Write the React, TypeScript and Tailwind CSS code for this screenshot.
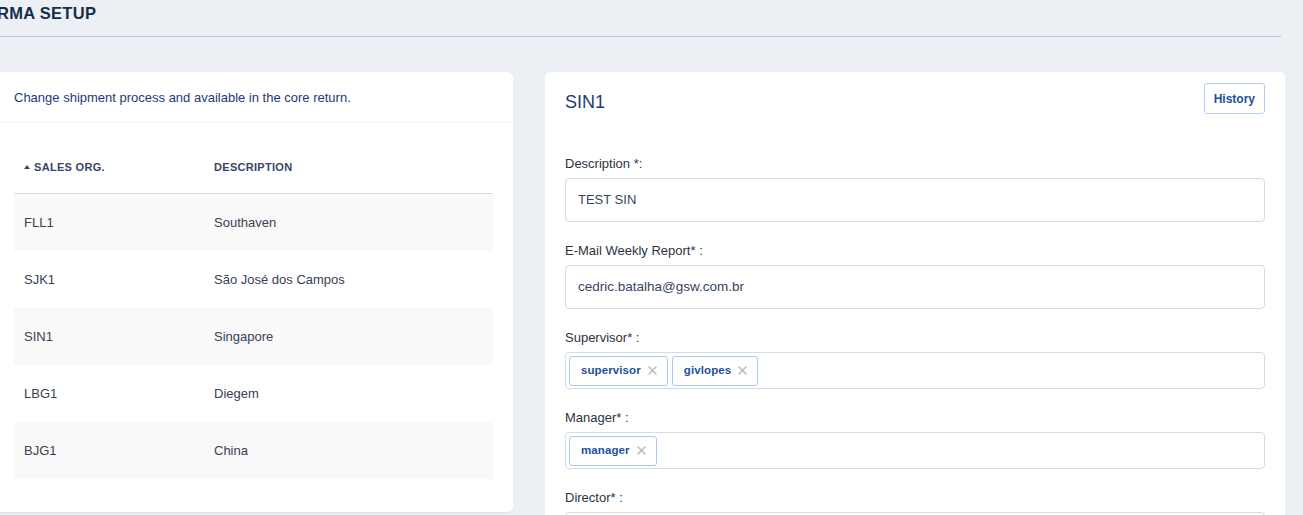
import React from "react";

const rows = [
  { org: "FLL1", desc: "Southaven" },
  { org: "SJK1", desc: "São José dos Campos" },
  { org: "SIN1", desc: "Singapore" },
  { org: "LBG1", desc: "Diegem" },
  { org: "BJG1", desc: "China" },
];

function XIcon() {
  return (
    <svg width="9" height="9" viewBox="0 0 9 9" className="shrink-0">
      <path d="M1 1L8 8M8 1L1 8" stroke="#b7b7b7" strokeWidth="1.4" strokeLinecap="round" />
    </svg>
  );
}

function Chip({ label }: { label: string }) {
  return (
    <div className="h-[30px] flex items-center gap-[7px] pl-[11px] pr-[10px] border border-[#aac7f4] rounded-[3px] bg-white">
      <span className="text-[11.5px] font-bold tracking-[0.1px] text-[#1f4fa2] leading-none">{label}</span>
      <XIcon />
    </div>
  );
}

function Label({ children, first }: { children: React.ReactNode; first?: boolean }) {
  return (
    <div className={`${first ? "" : "mt-[20px]"} pt-px text-[13px] leading-[16px] text-[#2c3441] mb-[6px]`}>
      {children}
    </div>
  );
}

export default function App() {
  return (
    <div className="w-[1303px] h-[515px] overflow-hidden bg-[#ecf0f4] font-['Liberation_Sans',Arial,sans-serif]">
      <div className="h-[36px] pb-[9px] flex items-center">
        <h1 className="-ml-[3px] text-[16.5px] font-bold tracking-[0.3px] text-[#172e4b] leading-none">RMA SETUP</h1>
      </div>
      <div className="w-[1281px] h-px bg-[#b9c9d7]" />
      <div className="flex gap-8 mt-[35px] items-start">
        {/* Left card */}
        <div className="w-[513px] h-[441px] bg-white rounded-r-[6px] border-b border-[#dde3ea]">
          <div className="h-[51px] flex items-center pt-px px-[14px] border-b border-[#f0f2f5]">
            <span className="text-[13px] text-[#1c3a78]">Change shipment process and available in the core return.</span>
          </div>
          <div className="ml-[14px] mr-[20px]">
            <div className="h-[71px] pt-[37px] flex items-start border-b border-[#dcdcdc] pl-[10px] text-[11px] font-bold tracking-[0.3px] text-[#364666] leading-[14px]">
              <div className="w-[190px] flex items-center gap-[4px]">
                <svg width="6" height="4" viewBox="0 0 6 4"><path d="M0 4L3 0L6 4Z" fill="#364666" /></svg>
                <span>SALES ORG.</span>
              </div>
              <div>DESCRIPTION</div>
            </div>
            {rows.map((r, i) => (
              <div
                key={r.org}
                className={`h-[57px] flex items-center pl-[10px] text-[13px] text-[#374255] ${i % 2 === 0 ? "bg-[#f9f9f9]" : "bg-white"}`}
              >
                <div className="w-[190px]">{r.org}</div>
                <div>{r.desc}</div>
              </div>
            ))}
          </div>
        </div>

        {/* Right card */}
        <div className="w-[740px] h-[460px] bg-white rounded-[6px] pt-[11px] pl-[20px] pr-[20px]">
          <div className="flex justify-between items-start">
            <h2 className="mt-[7px] text-[18px] leading-[24px] text-[#1a3c78]">SIN1</h2>
            <button className="h-[31px] px-[9px] border border-[#b4cdf4] rounded-[3px] text-[12px] font-bold text-[#1e4ea0] bg-white">
              History
            </button>
          </div>
          <div className="mt-[41px]">
            <Label first>Description *:</Label>
            <div className="h-[44px] border border-[#d3dbe8] rounded-[4px] flex items-center px-[12px] text-[13px] text-[#364460]">
              TEST SIN
            </div>

            <Label>E-Mail Weekly Report* :</Label>
            <div className="h-[44px] border border-[#d3dbe8] rounded-[4px] flex items-center px-[12px] text-[13.5px] text-[#364460]">
              cedric.batalha@gsw.com.br
            </div>

            <Label>Supervisor* :</Label>
            <div className="h-[37px] border border-[#d3dbe8] rounded-[4px] flex items-center gap-[4px] px-[3px]">
              <Chip label="supervisor" />
              <Chip label="givlopes" />
            </div>

            <Label>Manager* :</Label>
            <div className="h-[37px] border border-[#d3dbe8] rounded-[4px] flex items-center gap-[4px] px-[3px]">
              <Chip label="manager" />
            </div>

            <Label>Director* :</Label>
            <div className="h-[37px] border border-[#d3dbe8] rounded-[4px] flex items-center gap-[4px] px-[3px]">
              <Chip label="director" />
            </div>
          </div>
        </div>
      </div>
    </div>
  );
}
